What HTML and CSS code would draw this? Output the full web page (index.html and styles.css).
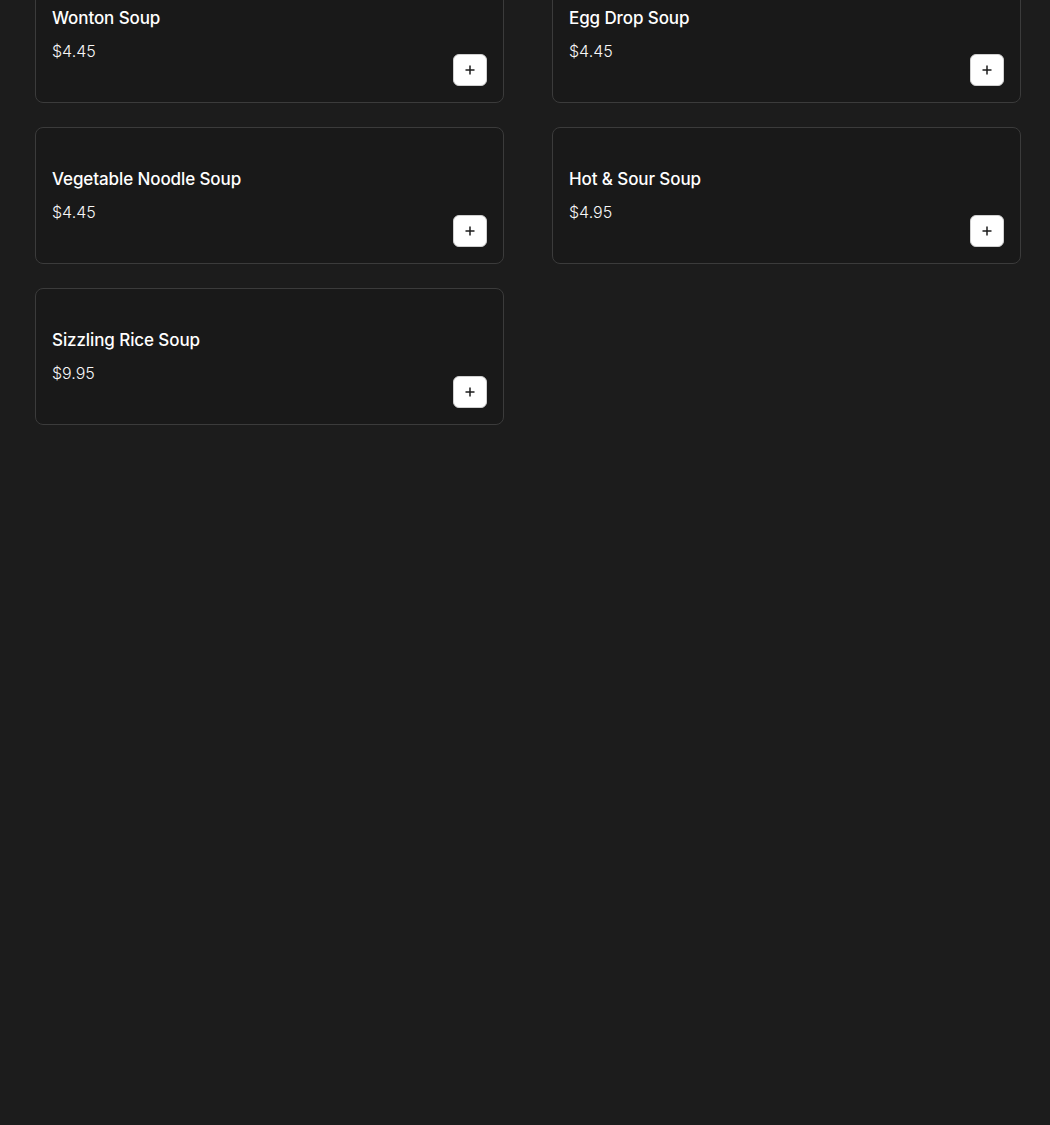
FILE: index.html
```html
<!DOCTYPE html>
<html>
<head>
<meta charset="utf-8">
<link rel="stylesheet" href="styles.css">
</head>
<body>
<div class="grid">
  <div class="card">
    <div class="info"><div class="name">Wonton Soup</div><div class="price">$4.45</div></div>
    <button class="add"><svg viewBox="0 0 12 12" width="12" height="12"><path d="M6 1.5v9M1.5 6h9" stroke="#1c1c1c" stroke-width="1.5" fill="none"/></svg></button>
  </div>
  <div class="card">
    <div class="info"><div class="name">Egg Drop Soup</div><div class="price">$4.45</div></div>
    <button class="add"><svg viewBox="0 0 12 12" width="12" height="12"><path d="M6 1.5v9M1.5 6h9" stroke="#1c1c1c" stroke-width="1.5" fill="none"/></svg></button>
  </div>
  <div class="card">
    <div class="info"><div class="name">Vegetable Noodle Soup</div><div class="price">$4.45</div></div>
    <button class="add"><svg viewBox="0 0 12 12" width="12" height="12"><path d="M6 1.5v9M1.5 6h9" stroke="#1c1c1c" stroke-width="1.5" fill="none"/></svg></button>
  </div>
  <div class="card">
    <div class="info"><div class="name">Hot &amp; Sour Soup</div><div class="price">$4.95</div></div>
    <button class="add"><svg viewBox="0 0 12 12" width="12" height="12"><path d="M6 1.5v9M1.5 6h9" stroke="#1c1c1c" stroke-width="1.5" fill="none"/></svg></button>
  </div>
  <div class="card">
    <div class="info"><div class="name">Sizzling Rice Soup</div><div class="price">$9.95</div></div>
    <button class="add"><svg viewBox="0 0 12 12" width="12" height="12"><path d="M6 1.5v9M1.5 6h9" stroke="#1c1c1c" stroke-width="1.5" fill="none"/></svg></button>
  </div>
</div>
</body>
</html>
```
FILE: styles.css
```css
html, body {
  margin: 0;
  background: #1c1c1c;
  font-family: Inter, "Open Sans", sans-serif;
  color: #fff;
}
.grid {
  display: grid;
  grid-template-columns: 469px 469px;
  column-gap: 48px;
  row-gap: 24px;
  padding: 0 29px 0 35px;
  margin-top: -34px;
}
.card {
  box-sizing: border-box;
  height: 137px;
  border: 1px solid #3b3b3b;
  border-radius: 8px;
  background: #191919;
  padding: 16px;
  display: flex;
  justify-content: space-between;
  align-items: flex-end;
}
.info {
  align-self: flex-start;
  padding-top: 23px;
}
.name {
  font-size: 17px;
  font-weight: 500;
  line-height: 24px;
  letter-spacing: -0.1px;
}
.price {
  margin-top: 11px;
  font-size: 16px;
  font-weight: 300;
  line-height: 20px;
  color: #f7f7f7;
}
.add {
  width: 34px;
  height: 32px;
  border: 1px solid #d0d0d0;
  border-radius: 6px;
  background: #fff;
  padding: 0;
  display: flex;
  align-items: center;
  justify-content: center;
}
.add svg { display: block; }
```
